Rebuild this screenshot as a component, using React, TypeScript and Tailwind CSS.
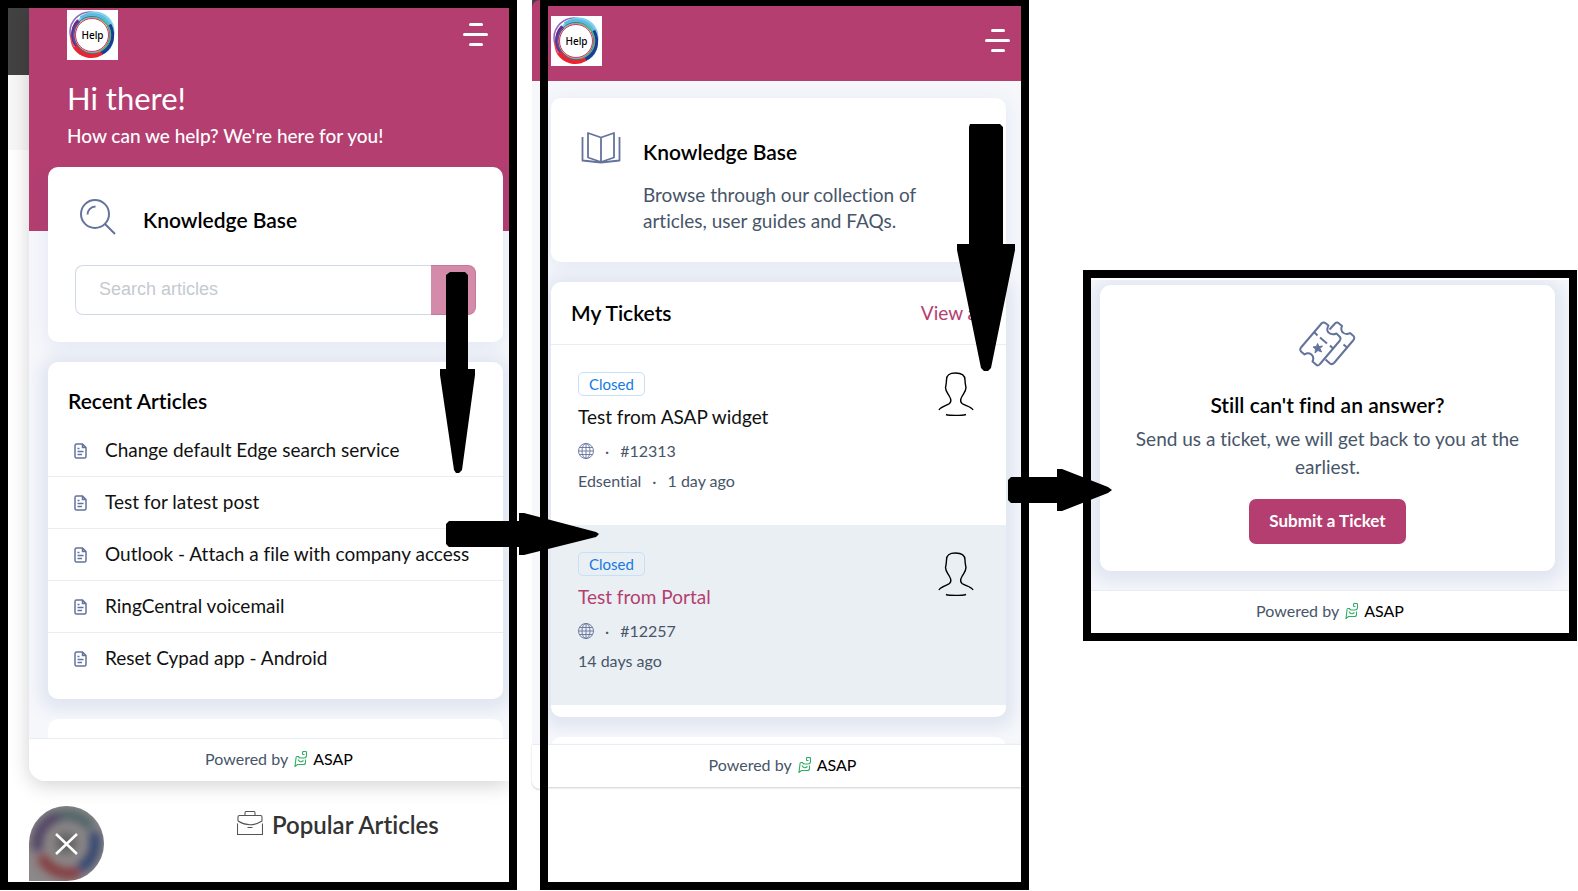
import { ReactNode } from "react";

const articles = [
    "Change default Edge search service",
    "Test for latest post",
    "Outlook - Attach a file with company access",
    "RingCentral voicemail",
    "Reset Cypad app - Android",
];

const tickets = [
    { id: "#12313", title: "Test from ASAP widget", meta: ["Edsential", "1 day ago"], active: false },
    { id: "#12257", title: "Test from Portal", meta: ["14 days ago"], active: true },
];

function HelpLogo() {
    return (
        <svg viewBox="0 0 51 50" className="h-[50px] w-[51px] shrink-0 bg-white" role="img" aria-label="Help">
            <g fill="none">
                <circle cx="23" cy="22" r="20" stroke="#8d6bb8" strokeWidth="1.5" />
                <circle cx="27.500" cy="21.500" r="18.500" stroke="#7fd0ea" strokeWidth="3" />
                <circle cx="27.500" cy="27" r="18.500" stroke="#2c6fc0" strokeWidth="2" />
                <circle cx="22" cy="28.500" r="17.500" stroke="#f04a50" strokeWidth="2" />
                <path d="M15 40A19 19 0 0 1 12 11" stroke="#6a2c8c" strokeWidth="5" />
                <path d="M14 8A20 20 0 0 1 42 15" stroke="#5cbbe0" strokeWidth="4" />
                <path d="M42 15A20 20 0 0 1 33 43" stroke="#1f3a93" strokeWidth="5" />
                <path d="M9 36A17.500 17.500 0 0 0 34 42" stroke="#ee2330" strokeWidth="6" />
                <circle cx="25" cy="25" r="18.500" stroke="#4d5fb0" strokeWidth="1" />
                <circle cx="26" cy="25" r="17.500" stroke="#4fb489" strokeWidth="1.5" />
                <circle cx="25" cy="25" r="17" stroke="#d2c04a" strokeWidth="1" />
            </g>
            <circle cx="25" cy="25" r="16.500" fill="#fff" stroke="#d8337c" strokeWidth="1" />
            <text x="25.500" y="28.500" textAnchor="middle" fontSize="10" fontFamily="Noto Sans, sans-serif" fontWeight="500" fill="#000">
                Help
            </text>
        </svg>
    );
}

function MenuButton() {
    return (
        <button type="button" aria-label="Menu" className="flex h-[23px] w-[25px] flex-col items-center justify-between">
            <span className="h-[3px] w-[14px] rounded-full bg-white" />
            <span className="h-[3px] w-[25px] rounded-full bg-white" />
            <span className="h-[3px] w-[14px] rounded-full bg-white" />
        </button>
    );
}

function SearchIcon() {
    return (
        <svg viewBox="0 0 36 36" className="size-9" fill="none" stroke="#64739c" strokeWidth="2">
            <circle cx="15" cy="15" r="14" />
            <path d="M7.500 15.500A8 8 0 0 1 15.500 7.500M25 25L35 35" />
        </svg>
    );
}

function BookIcon() {
    return (
        <svg viewBox="0 0 40 32" className="h-8 w-10" fill="none" stroke="#64739c" strokeWidth="1.8" strokeLinejoin="round">
            <path d="M20 5.500L7 1V25.500L20 30L33 25.500V1ZM20 5.500V30" />
            <path d="M1.500 5V28.500L20 30.500L38.500 28.500V5" />
        </svg>
    );
}

function DocIcon() {
    return (
        <svg viewBox="0 0 13 16" className="h-4 w-[13px]" fill="none" stroke="#64739c" strokeWidth="1.5">
            <path d="M2.500 1H8.500L12 4.500V13.500Q12 15 10.500 15H2.500Q1 15 1 13.500V2.500Q1 1 2.500 1ZM8.500 1V4.500H12" />
            <path d="M3.500 5.500H5.500M3.500 8.500H9.500M3.500 11.500H8" />
        </svg>
    );
}

function GlobeIcon() {
    return (
        <svg viewBox="0 0 16 16" className="size-4" fill="none" stroke="#64739c" strokeWidth="0.9">
            <circle cx="8" cy="8" r="7.500" />
            <ellipse cx="8" cy="8" rx="4" ry="7.500" />
            <path d="M8 .5V15.500M.5 8H15.500M1.500 4.500H14.500M1.500 11.500H14.500" />
        </svg>
    );
}

function PersonIcon() {
    return (
        <svg viewBox="0 0 36 44" className="h-11 w-9" fill="none" stroke="#000" strokeWidth="1.4">
            <path d="M1 38C2 35 9 33.500 11.500 31.500C13.500 29.500 13 27 11.500 24.500C9.500 21 7.500 19 7.500 15.500C8 13 8.500 11 8.500 8C8.500 3 11 1 17.500 1C24 1 27 3 27 8C27 11 27.500 13 28 15.500C28 19 26 21 24 24.500C22.500 27 22 29.500 24 31.500C26.500 33.500 34 35 35 38" />
            <path d="M8 42.500Q10 43.500 17.500 43.500T28 42.500" />
        </svg>
    );
}

function TicketsIcon() {
    return (
        <svg viewBox="0 0 57 46" className="h-[46px] w-[57px]" fill="none" stroke="#64739c" strokeWidth="2" strokeLinejoin="round">
            <path d="M22.500 2.500Q24.500 .5 27 2.500L29.500 4.500Q27 9 29.500 11.500Q33 14.500 37.500 12.500L40.500 15.500Q42.500 17.500 40.500 20L21 43Q19 45.500 17 43.500L13.500 40.500Q15.500 36.500 12.500 33.500Q9 31 5.500 33.500L2 30.500Q.5 28.500 2 26.500Z" />
            <path d="M30.500 8.500L36 2.500Q38 .5 40 2.500L43 5Q41 9.500 44.500 12Q48 14 51 12L54.500 15Q56 17 54.500 19L35 42Q33 44 31 42.500L26.500 38.500" />
            <path d="M15.500 11.500L18.500 14.500M21 16.500L28 22.500M31 24.500L34 27.500M44.500 23.500L48 26.500" />
            <path d="M18.500 22.500L20 25.500L23.500 25L21 27.500L22.500 31L19 29.500L16 32L16.500 28L14 26L17.500 25.500Z" fill="#64739c" strokeWidth="1" />
        </svg>
    );
}

function BriefcaseIcon() {
    return (
        <svg viewBox="0 0 26 24" className="mb-1 h-6 w-[26px]" fill="none" stroke="#555" strokeWidth="1.1">
            <path d="M8 4V2Q8 .5 9 .5H17Q18 .5 18 2V4M1 10V6Q1 4.500 2.500 4.500H23.500Q25 4.500 25 6V10Q13 17.500 1 10M.5 12.500V23.500H25.500V12.500M10.500 16.500H15.500" />
        </svg>
    );
}

function PoweredBy({ className = "" }: { className?: string }) {
    return (
        <footer className={`flex items-center justify-center gap-[6px] border-t border-[#e8ecf3] bg-white pb-[2px] text-base text-[#475569] ${className}`}>
            <span>Powered by</span>
            <svg viewBox="0 0 13 16" className="h-4 w-[13px]" fill="none" stroke="#2fae63" strokeWidth="1.1">
                <path d="M8.500 3.500V1.500Q8.500 .5 9.500 .5H11.500Q12.500 .5 12.500 1.500V4.500Q12.500 7 10 7H6.500Q5 7 4.500 5.500H3Q2 5.500 2 7L1 15.500L3.500 13.500H9.500Q11.500 13.500 11.500 11.500V8.500M4 8.500Q6 12.500 9.500 9.500M8.500 3.500H10.500" />
            </svg>
            <a href="#asap" className="text-black">ASAP</a>
        </footer>
    );
}

function Card({ children, className = "" }: { children?: ReactNode; className?: string }) {
    return <section className={`bg-white ${className}`}>{children}</section>;
}

function Arrow({ className, box, d }: { className: string; box: string; d: string }) {
    return (
        <svg viewBox={box} className={`pointer-events-none absolute z-20 ${className}`} aria-hidden="true">
            <path d={d} />
        </svg>
    );
}

function HomePanel() {
    return (
        <div className="relative h-full">
            <div className="flex h-full flex-col overflow-hidden border-8 border-black bg-white">
                <div className="flex">
                    <div className="flex w-[21px] shrink-0 flex-col">
                        <div className="h-[67px] bg-[#424242]" />
                        <div className="h-[75px] bg-[#f7f7f7]" />
                    </div>
                    <div className="min-w-0 flex-1 overflow-hidden rounded-bl-2xl bg-[#f5f7fb] shadow-[0_4px_20px_#0000002e]">
                        <header className="h-[223px] bg-[#b43e70] pt-[2px] pr-[21px] pl-[38px] text-white">
                            <div className="flex items-start justify-between">
                                <HelpLogo />
                                <div className="pt-[13px]">
                                    <MenuButton />
                                </div>
                            </div>
                            <h1 className="mt-5 text-[31px] leading-9">Hi there!</h1>
                            <p className="mt-2 text-[19px] leading-6 font-medium">How can we help? We're here for you!</p>
                        </header>
                        <div className="-mt-16 flex h-[571px] flex-col gap-5 overflow-hidden pr-[6px] pl-[19px]">
                            <Card className="shrink-0 rounded-[10px] px-[27px] pt-8 pb-[27px] shadow-[0_4px_20px_#3d5c9e1a]">
                                <div className="flex h-9 items-center gap-[27px] pl-[5px]">
                                    <SearchIcon />
                                    <h2 className="pt-[5px] text-[21px] leading-7 font-semibold">Knowledge Base</h2>
                                </div>
                                <form className="mt-[30px] flex h-[50px]">
                                    <input
                                        type="search"
                                        aria-label="Search articles"
                                        placeholder="Search articles"
                                        className="min-w-0 flex-1 rounded-l-lg border border-r-0 border-[#d0dae6] pb-[2px] pl-[23px] font-['Liberation_Sans',sans-serif] text-lg outline-none placeholder:text-[#c5cad0]"
                                    />
                                    <button type="button" aria-label="Search" className="w-[45px] rounded-r-lg border border-l-0 border-[#c4789b] bg-[#d38ba9]" />
                                </form>
                            </Card>
                            <Card className="shrink-0 rounded-[10px] pt-6 pb-[15px] shadow-[0_3px_16px_8px_#3d5c9e1c]">
                                <h2 className="pl-5 text-[21px] leading-[30px] font-semibold">Recent Articles</h2>
                                <ul className="mt-[9px] divide-y divide-[#e8ecf3]">
                                    {articles.map((article) => (
                                        <li key={article}>
                                            <a href="#article" className="flex h-[51px] items-center gap-[18px] pl-[26px] text-[19px] whitespace-nowrap text-[#111]">
                                                <DocIcon />
                                                {article}
                                            </a>
                                        </li>
                                    ))}
                                </ul>
                            </Card>
                            <Card className="h-20 shrink-0 rounded-[10px]" />
                        </div>
                        <PoweredBy className="relative h-[43px] pl-5" />
                    </div>
                </div>
                <div className="relative mt-[25px] flex items-start gap-[133px] pl-[21px]">
                    <button
                        type="button"
                        aria-label="Close"
                        className="relative flex size-[75px] shrink-0 items-center justify-center overflow-hidden rounded-full rounded-bl-lg bg-[#8c8788]"
                    >
                        <svg viewBox="0 0 75 75" className="absolute size-full">
                            <defs>
                                <filter id="soft" x="-20%" y="-20%" width="140%" height="140%">
                                    <feGaussianBlur stdDeviation="4" />
                                </filter>
                            </defs>
                            <g fill="none" strokeWidth="11" filter="url(#soft)">
                                <circle cx="37" cy="37" r="6" fill="#555" stroke="#666" />
                                <path d="M9 45A29 29 0 0 1 30 10" stroke="#4d4262" />
                                <path d="M30 10A29 29 0 0 1 62 22" stroke="#4f6468" />
                                <path d="M64 26A29 29 0 0 1 50 63" stroke="#33456e" />
                                <path d="M50 66A31 31 0 0 1 12 50" stroke="#843a3e" />
                            </g>
                            <path d="M27 28L48 48M48 28L27 48" stroke="#fff" strokeWidth="2.500" />
                        </svg>
                    </button>
                    <h2 className="flex items-center gap-[9px] pt-[3px] text-2xl leading-8 font-semibold whitespace-nowrap text-[#333]">
                        <BriefcaseIcon />
                        Popular Articles
                    </h2>
                </div>
            </div>
            <Arrow className="top-[272px] right-[41px] h-[203px] w-9" box="0 0 36 203" d="M10 0H25L28 3V97H35V103L22 198L19 201H16L14 198L0 103V97H6V3Z" />
            <Arrow className="top-[512px] -right-[82px] h-[44px] w-[153px]" box="0 0 153 44" d="M3 9H73V1H78L150 20L153 22L150 25L78 43H73V35H3L0 32V12Z" />
        </div>
    );
}

function TicketRow({ ticket }: { ticket: (typeof tickets)[number] }) {
    return (
        <li className={`flex h-[180px] items-start justify-between pt-[27px] pr-8 pl-[27px] ${ticket.active ? "bg-[#eaeff3]" : ""}`}>
            <div>
                <span className="flex h-6 w-[67px] items-center justify-center rounded-[5px] border border-[#c5e0fb] text-[15px] text-[#1479e6]">Closed</span>
                <a href="#ticket" className={`mt-2 block text-[19px] leading-[26px] ${ticket.active ? "text-[#b43e70]" : "text-[#111]"}`}>{ticket.title}</a>
                <div className="mt-[9px] flex h-6 items-center gap-[11px] text-base text-[#475569]">
                    <GlobeIcon />
                    <span>·</span>
                    <span>{ticket.id}</span>
                </div>
                <div className="mt-[6px] flex h-6 items-center gap-[11px] text-base text-[#475569]">
                    <span>{ticket.meta[0]}</span>
                    {ticket.meta[1] && <span>·</span>}
                    {ticket.meta[1] && <span>{ticket.meta[1]}</span>}
                </div>
            </div>
            <PersonIcon />
        </li>
    );
}

function TicketsPanel() {
    return (
        <div className="relative flex h-full">
            <div className="flex w-2 shrink-0 flex-col">
                <div className="bg-[#424242]">
                    <div className="h-[81px] rounded-tl-lg bg-[#b43e70]" />
                </div>
                <div className="h-[663px] bg-[#f5f7fb]" />
                <div className="h-[45px] rounded-bl-lg border-t border-[#e8ecf3] bg-white shadow-[0_1px_2px_#00000033]" />
            </div>
            <div className="min-w-0 flex-1 overflow-hidden border-8 border-t-6 border-black bg-white">
                <header className="flex h-[75px] items-start justify-between bg-[#b43e70] pt-[10px] pr-[11px] pl-[3px]">
                    <HelpLogo />
                    <div className="pt-[13px]">
                        <MenuButton />
                    </div>
                </header>
                <div className="flex h-[663px] flex-col gap-5 overflow-hidden bg-[#f5f7fb] pt-[17px] pr-[15px] pl-[3px]">
                    <Card className="flex h-[164px] shrink-0 gap-[22px] rounded-[10px] pt-[34px] pl-[30px] shadow-[0_4px_20px_#3d5c9e1a]">
                        <BookIcon />
                        <div className="pt-[6px]">
                            <h2 className="text-[21px] leading-7 font-semibold">Knowledge Base</h2>
                            <p className="mt-4 w-[290px] text-[19px] leading-[26px] text-[#475569]">Browse through our collection of articles, user guides and FAQs.</p>
                        </div>
                    </Card>
                    <Card className="shrink-0 rounded-[10px] pb-3 shadow-[0_3px_16px_8px_#3d5c9e1c]">
                        <div className="flex h-[63px] items-center justify-between border-b border-[#e8ecf3] px-5">
                            <h2 className="text-[21px] font-semibold">My Tickets</h2>
                            <a href="#tickets" className="text-[19px] text-[#b43e70]">View all</a>
                        </div>
                        <ul>
                            {tickets.map((ticket) => (
                                <TicketRow key={ticket.id} ticket={ticket} />
                            ))}
                        </ul>
                    </Card>
                    <Card className="h-20 shrink-0 rounded-[10px]" />
                </div>
                <PoweredBy className="relative h-[43px] pr-1 shadow-[0_1px_2px_#00000033]" />
            </div>
            <Arrow className="top-[124px] right-[13px] h-[248px] w-[60px]" box="0 0 60 248" d="M14 0H44L47 3V120H59V126L35 244L32 247H28L25 244L1 126V120H13V3Z" />
            <Arrow className="top-[468px] -right-[83px] h-[44px] w-[104px]" box="0 0 104 44" d="M3 9H49V1H54L100 19L104 22L100 25L54 43H49V35H3L0 32V12Z" />
        </div>
    );
}

function SubmitPanel() {
    return (
        <div className="border-8 border-black bg-white pt-[2px]">
            <div className="overflow-hidden bg-[#f5f7fb] pt-[5px] pr-[14px] pb-[19px] pl-[9px]">
                <Card className="flex flex-col items-center rounded-[11px] px-8 pt-9 pb-[27px] text-center shadow-[0_3px_16px_8px_#3d5c9e1c]">
                    <TicketsIcon />
                    <h2 className="mt-6 text-[21px] leading-7 font-semibold">Still can't find an answer?</h2>
                    <p className="mt-[6px] text-[19px] leading-7 text-[#475569]">Send us a ticket, we will get back to you at the earliest.</p>
                    <button type="button" className="mt-[18px] h-[45px] w-[157px] rounded-[7px] bg-[#b43e70] pb-px text-[17px] font-bold text-white">Submit a Ticket</button>
                </Card>
            </div>
            <PoweredBy className="relative h-[43px]" />
        </div>
    );
}

export default function App() {
    return (
        <main className="grid min-h-screen grid-cols-[517fr_512fr_548fr] bg-white pr-px font-['Lato',sans-serif] text-black [font-variant-ligatures:none]">
            <div className="min-w-0 pb-px">
                <HomePanel />
            </div>
            <div className="min-w-0 pb-px pl-[15px]">
                <TicketsPanel />
            </div>
            <div className="min-w-0 pt-[270px] pl-[54px]">
                <SubmitPanel />
            </div>
        </main>
    );
}
